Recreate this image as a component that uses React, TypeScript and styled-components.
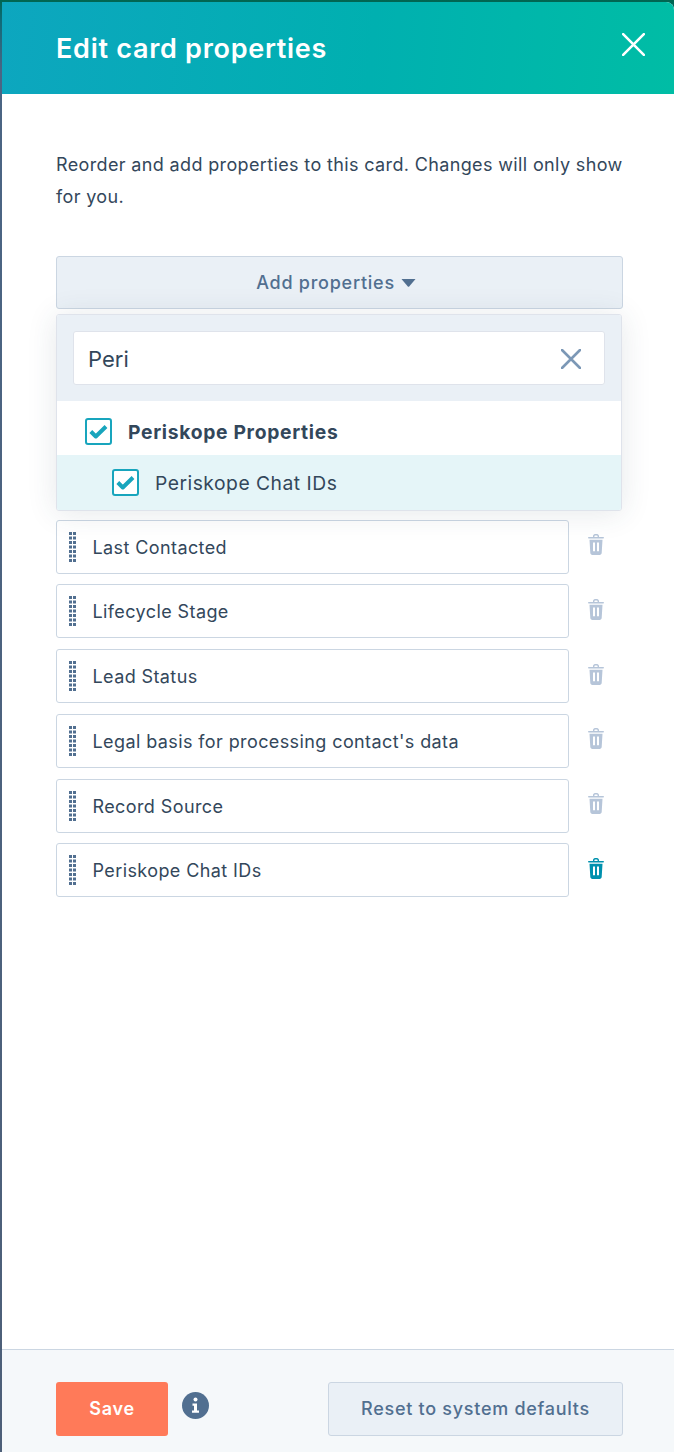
import styled, { createGlobalStyle } from 'styled-components';

const GlobalStyle = createGlobalStyle`
  html, body, #root {
    margin: 0;
    height: 100%;
  }
  body {
    font-family: "Inter", "Liberation Sans", sans-serif;
    color: #33475b;
  }
`;

const Backdrop = styled.div`
  height: 1452px;
  padding: 2px 0 0 2px;
  box-sizing: border-box;
  background: linear-gradient(180deg, #006650 0, #0e6b78 20px, #4b6584 70px, #4d5f78 100%);
`;

const Panel = styled.div`
  height: 100%;
  display: flex;
  flex-direction: column;
  background: #fff;
  border-top-right-radius: 8px;
  overflow: hidden;
`;

const Header = styled.header`
  height: 92px;
  flex: none;
  display: flex;
  align-items: center;
  justify-content: space-between;
  padding: 0 29px 0 54px;
  background: linear-gradient(95deg, #0da6bf 0%, #00b0b0 55%, #00bda5 100%);
`;

const Title = styled.h1`
  margin: 0;
  font-size: 27px;
  font-weight: 600;
  letter-spacing: 0.72px;
  color: #fff;
`;

const CloseButton = styled.button`
  border: 0;
  padding: 0;
  background: none;
  display: flex;
  margin-bottom: 8px;
`;

const Body = styled.main`
  flex: 1;
  padding: 55px 51px 0 54px;
`;

const Intro = styled.p`
  margin: 0 0 43px;
  font-size: 18px;
  line-height: 32px;
  letter-spacing: 0.36px;
`;

const PickerArea = styled.div`
  position: relative;
`;

const AddButton = styled.button`
  width: 100%;
  height: 53px;
  padding: 0 7px 0 0;
  display: flex;
  align-items: center;
  justify-content: center;
  gap: 6px;
  border: 1px solid #cbd6e2;
  border-radius: 3px;
  background: #eaf0f6;
  color: #516f90;
  font: 500 18px "Inter", sans-serif;
  letter-spacing: 0.75px;
`;

const Dropdown = styled.div`
  position: absolute;
  top: 58px;
  left: 0;
  right: 1px;
  height: 197px;
  box-sizing: border-box;
  border: 1px solid #dfe3eb;
  border-radius: 3px;
  background: #fff;
  box-shadow: 0 2px 30px rgba(45, 62, 80, 0.12);
  overflow: hidden;
  z-index: 2;
`;

const SearchBar = styled.div`
  height: 86px;
  box-sizing: border-box;
  padding: 16px;
  background: #eaf0f6;
`;

const SearchBox = styled.div`
  height: 54px;
  box-sizing: border-box;
  display: flex;
  align-items: center;
  justify-content: space-between;
  padding: 1px 23px 0 14px;
  border: 1px solid #dfe3eb;
  border-radius: 3px;
  background: #fff;
  font-size: 22px;
`;

const OptionRow = styled.div<{ $nested?: boolean }>`
  height: ${({ $nested }) => ($nested ? 55 : 54)}px;
  box-sizing: border-box;
  display: flex;
  align-items: center;
  gap: 16px;
  padding: ${({ $nested }) => ($nested ? '0 0 0 55px' : '7px 0 0 28px')};
  background: ${({ $nested }) => ($nested ? '#e5f5f8' : '#fff')};
  font-size: 19.300px;
  letter-spacing: ${({ $nested }) => ($nested ? 0.5 : 0.68)}px;
  font-weight: ${({ $nested }) => ($nested ? 400 : 700)};
`;

const CheckBox = styled.span`
  width: 27px;
  height: 27px;
  box-sizing: border-box;
  display: flex;
  align-items: center;
  justify-content: center;
  border: 2px solid #18a5bd;
  border-radius: 3px;
  background: #fff;
`;

const PropertyList = styled.div`
  display: flex;
  flex-direction: column;
  gap: 10.72px;
  padding-top: 210.7px;
`;

const PropertyRow = styled.div`
  display: flex;
  align-items: center;
`;

const PropertyField = styled.div`
  width: 513px;
  height: 54px;
  box-sizing: border-box;
  display: flex;
  align-items: center;
  gap: 16.500px;
  padding-left: 12px;
  border: 1px solid #cbd6e2;
  border-radius: 3px;
  background: #fff;
  font-size: 18px;
  letter-spacing: 0.4px;
`;

const PropertyName = styled.span`
  margin-top: 1px;
`;

const TrashButton = styled.button<{ $active?: boolean }>`
  margin: 0 0 4px 19px;
  padding: 0;
  border: 0;
  background: none;
  display: flex;
  color: ${({ $active }) => ($active ? '#0091ae' : '#b6c5d9')};
`;

const Footer = styled.footer`
  height: 103px;
  flex: none;
  box-sizing: border-box;
  display: flex;
  justify-content: space-between;
  padding: 32px 51px 0 54px;
  border-top: 1px solid #cbd6e2;
  background: #f5f8fa;
`;

const FooterLeft = styled.div`
  display: flex;
  gap: 14px;
`;

const SaveButton = styled.button`
  width: 112px;
  height: 54px;
  padding: 0 0 2px;
  border: 0;
  border-radius: 3px;
  background: #ff7a59;
  color: #fff;
  font: 600 18px "Inter", sans-serif;
  letter-spacing: 0.75px;
`;

const InfoBadge = styled.span`
  width: 27px;
  height: 27px;
  margin-top: 10px;
  display: flex;
`;

const ResetButton = styled.button`
  width: 295px;
  height: 54px;
  padding: 0 0 2px;
  border: 1px solid #cbd6e2;
  border-radius: 3px;
  background: #eaf0f6;
  color: #516f90;
  font: 500 18px "Inter", sans-serif;
  letter-spacing: 0.72px;
`;

const properties = [
  'Last Contacted',
  'Lifecycle Stage',
  'Lead Status',
  "Legal basis for processing contact's data",
  'Record Source',
  'Periskope Chat IDs',
];

function CrossIcon({ size, color, width }: { size: number; color: string; width: number }) {
  return (
    <svg width={size} height={size} viewBox="0 0 20 20" fill="none">
      <path d="M1 1l18 18M19 1L1 19" stroke={color} strokeWidth={width} strokeLinecap="round" />
    </svg>
  );
}

function CheckIcon() {
  return (
    <svg width="19" height="15" viewBox="0 0 19 15">
      <path d="M1.800 7.500l5 5L17 2.500" fill="none" stroke="#18a5bd" strokeWidth="4" strokeLinejoin="round" />
    </svg>
  );
}

function GripIcon() {
  const rows = [0, 1, 2, 3, 4, 5, 6];
  return (
    <svg width="7" height="30" viewBox="0 0 7 30" fill="#516f90">
      {rows.map((row) => (
        <g key={row}>
          <rect x="0" y={row * 4.5} width="3" height="3" />
          <rect x="4" y={row * 4.5} width="3" height="3" />
        </g>
      ))}
    </svg>
  );
}

function TrashIcon() {
  return (
    <svg width="16" height="21" viewBox="0 0 16 21" fill="currentColor">
      <path
        fillRule="evenodd"
        d="M5 3V2.200C5 1 5.900 0 7 0h2c1.100 0 2 1 2 2.200V3h4.200c.5 0 .8.400.8.800s-.3.800-.8.800H.8C.3 4.600 0 4.200 0 3.800S.3 3 .8 3H5zm1.400 0h3.200V2.200c0-.5-.3-.8-.7-.8H7.100c-.4 0-.7.300-.7.800V3z"
      />
      <path
        fillRule="evenodd"
        d="M1.500 5.800h13l-.8 13.300c-.1 1.100-1 1.900-2 1.900H4.300c-1 0-1.900-.8-2-1.900L1.500 5.800zM5 8.500v8.700h2V8.500H5zm4 0v8.700h2V8.500H9z"
      />
    </svg>
  );
}

export default function App() {
  return (
    <>
      <GlobalStyle />
      <Backdrop>
        <Panel>
          <Header>
            <Title>Edit card properties</Title>
            <CloseButton aria-label="Close">
              <CrossIcon size={23} color="#fff" width={2.2} />
            </CloseButton>
          </Header>
          <Body>
            <Intro>Reorder and add properties to this card. Changes will only show for you.</Intro>
            <PickerArea>
              <AddButton>
                Add properties
                <svg width="15" height="8" viewBox="0 0 15 8">
                  <path d="M0.500 0h14L8.200 7.500a1 1 0 0 1-1.400 0z" fill="#516f90" />
                </svg>
              </AddButton>
              <Dropdown>
                <SearchBar>
                  <SearchBox>
                    Peri
                    <CrossIcon size={20} color="#7c98b6" width={2.6} />
                  </SearchBox>
                </SearchBar>
                <OptionRow>
                  <CheckBox><CheckIcon /></CheckBox>
                  Periskope Properties
                </OptionRow>
                <OptionRow $nested>
                  <CheckBox><CheckIcon /></CheckBox>
                  Periskope Chat IDs
                </OptionRow>
              </Dropdown>
              <PropertyList>
                {properties.map((name, index) => (
                  <PropertyRow key={name}>
                    <PropertyField>
                      <GripIcon />
                      <PropertyName>{name}</PropertyName>
                    </PropertyField>
                    <TrashButton aria-label="Remove" $active={index === properties.length - 1}>
                      <TrashIcon />
                    </TrashButton>
                  </PropertyRow>
                ))}
              </PropertyList>
            </PickerArea>
          </Body>
          <Footer>
            <FooterLeft>
              <SaveButton>Save</SaveButton>
              <InfoBadge>
                <svg width="27" height="27" viewBox="0 0 27 27">
                  <circle cx="13.500" cy="13.500" r="13.500" fill="#516f90" />
                  <circle cx="13.500" cy="7.500" r="2" fill="#fff" />
                  <path d="M10.500 11.500h4.500v7h2v2.200h-7v-2.200h2v-4.800h-1.500z" fill="#fff" />
                </svg>
              </InfoBadge>
            </FooterLeft>
            <ResetButton>Reset to system defaults</ResetButton>
          </Footer>
        </Panel>
      </Backdrop>
    </>
  );
}
